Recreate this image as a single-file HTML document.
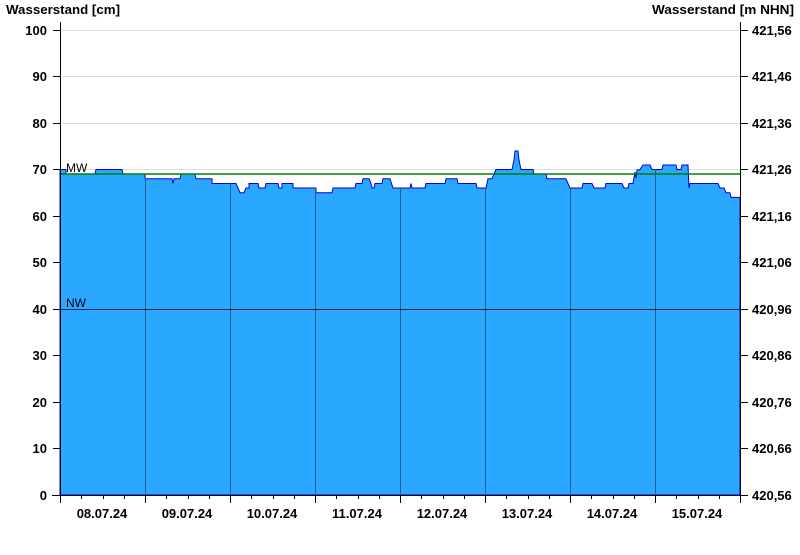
<!DOCTYPE html>
<html><head><style>
body{margin:0;background:#fff;width:800px;height:550px;overflow:hidden}
svg text{font-family:"Liberation Sans",Arial,sans-serif;font-weight:bold;font-size:13px;fill:#000}
</style></head><body>
<svg width="800" height="550" xmlns="http://www.w3.org/2000/svg">
<text x="6" y="14" textLength="114" lengthAdjust="spacingAndGlyphs">Wasserstand [cm]</text>
<text x="652" y="14" textLength="142" lengthAdjust="spacingAndGlyphs">Wasserstand [m NHN]</text>
<g stroke="#dcdcdc" stroke-width="1">
<line x1="60" x2="740" y1="30.5" y2="30.5"/><line x1="60" x2="740" y1="76.5" y2="76.5"/><line x1="60" x2="740" y1="123.5" y2="123.5"/><line x1="60" x2="740" y1="169.5" y2="169.5"/>
</g>
<polygon fill="#2aa8ff" stroke="#0000dd" stroke-width="1" points="60,495 60,169.5 66,169.5 66,174 95,174 96,169.5 122,169.5 123,174 145,174 145,178.8 172,178.8 173,183.5 174,178.8 180,178.8 181,174 195,174 196,178.8 212,178.8 212,183.5 236,183.5 238,188 240,192.7 244,192.7 246,188 249,188 249,183.5 258,183.5 259,188 265,188 266,183.5 278,183.5 279,188 282,188 282,183.5 293,183.5 293,188 316,188 316,192.7 332,192.7 333,188 355,188 356,183.5 362,183.5 363,178.8 369,178.8 371,183.5 372,188 374,188 375,183.5 382,183.5 383,178.8 390,178.8 393,188 410,188 411,183.5 412,188 425,188 426,183.5 445,183.5 446,178.8 457,178.8 458,183.5 476,183.5 477,188 486,188 488,178.8 492,178.8 494,174 496,169.5 512,169.5 514,160 515,151 518,151 519,160 521,169.5 533,169.5 534,174 546,174 547,178.8 566,178.8 568,183.5 570,188 582,188 583,183.5 592,183.5 594,188 605,188 606,183.5 622,183.5 624,188 628,188 629,183.5 633,183.5 635,172 636,178 637,170 640,169.5 643,165 650,165 652,169.5 662,169.5 663,165 676,165 677,169.5 681,169.5 682,165 688,165 689,188 690,183.5 718,183.5 720,188 724,188 726,192.7 730,192.7 731,197.4 740,197.4 740,495"/>
<g stroke="#1f5f8f" stroke-width="1">
<line x1="145.5" x2="145.5" y1="178" y2="495"/><line x1="230.5" x2="230.5" y1="183" y2="495"/><line x1="315.5" x2="315.5" y1="188" y2="495"/><line x1="400.5" x2="400.5" y1="188" y2="495"/><line x1="485.5" x2="485.5" y1="188" y2="495"/><line x1="570.5" x2="570.5" y1="188" y2="495"/><line x1="655.5" x2="655.5" y1="169" y2="495"/>
</g>
<line x1="60" x2="740" y1="174" y2="174" stroke="#008000" stroke-width="1.5"/>
<line x1="60" x2="740" y1="309.5" y2="309.5" stroke="#000" stroke-width="0.8"/>
<text x="66" y="172" style="font-weight:normal;font-size:12px">MW</text>
<text x="66" y="307" style="font-weight:normal;font-size:12px">NW</text>
<g stroke="#000" stroke-width="1">
<line x1="60.5" x2="60.5" y1="22" y2="503"/><line x1="740.5" x2="740.5" y1="22" y2="496"/>
<line x1="52" x2="740" y1="495.5" y2="495.5"/>
</g>
<g stroke="#000" stroke-width="1">
<path d="M53 30.5h7M53 76.5h7M53 123.5h7M53 169.5h7M53 216.5h7M53 262.5h7M53 309.5h7M53 355.5h7M53 402.5h7M53 448.5h7M740 30.5h8M740 76.5h8M740 123.5h8M740 169.5h8M740 216.5h8M740 262.5h8M740 309.5h8M740 355.5h8M740 402.5h8M740 448.5h8M740 495.5h8"/>
<path d="M60.5 495v8M145.5 495v8M230.5 495v8M315.5 495v8M400.5 495v8M485.5 495v8M570.5 495v8M655.5 495v8M740.5 495v8"/>
<path d="M81.5 495v4M103.5 495v4M124.5 495v4M166.5 495v4M188.5 495v4M209.5 495v4M251.5 495v4M273.5 495v4M294.5 495v4M336.5 495v4M358.5 495v4M379.5 495v4M421.5 495v4M443.5 495v4M464.5 495v4M506.5 495v4M528.5 495v4M549.5 495v4M591.5 495v4M613.5 495v4M634.5 495v4M676.5 495v4M698.5 495v4M719.5 495v4"/>
</g>
<g text-anchor="end">
<text x="47" y="35">100</text><text x="47" y="81">90</text><text x="47" y="128">80</text><text x="47" y="174">70</text><text x="47" y="221">60</text><text x="47" y="267">50</text><text x="47" y="314">40</text><text x="47" y="360">30</text><text x="47" y="407">20</text><text x="47" y="453">10</text><text x="47" y="500">0</text>
</g>
<g>
<text x="752" y="35">421,56</text><text x="752" y="81">421,46</text><text x="752" y="128">421,36</text><text x="752" y="174">421,26</text><text x="752" y="221">421,16</text><text x="752" y="267">421,06</text><text x="752" y="314">420,96</text><text x="752" y="360">420,86</text><text x="752" y="407">420,76</text><text x="752" y="453">420,66</text><text x="752" y="500">420,56</text>
</g>
<g text-anchor="middle">
<text x="102" y="518">08.07.24</text><text x="187" y="518">09.07.24</text><text x="272" y="518">10.07.24</text><text x="357" y="518">11.07.24</text><text x="442" y="518">12.07.24</text><text x="527" y="518">13.07.24</text><text x="612" y="518">14.07.24</text><text x="697" y="518">15.07.24</text>
</g>
</svg>
</body></html>
